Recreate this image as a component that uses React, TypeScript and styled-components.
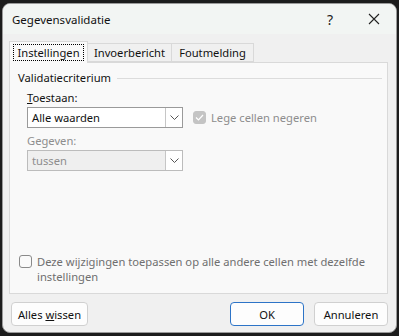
import { FC } from "react";
import styled, { createGlobalStyle } from "styled-components";

const GlobalStyle = createGlobalStyle`
  html, body {
    margin: 0;
    padding: 0;
    background: #1c1c1c;
  }
  body {
    font-family: "Segoe UI", "Noto Sans", "Open Sans", sans-serif;
    font-size: 11.2px;
    color: #1a1a1a;
  }
`;

const Window = styled.div`
  margin: 3px 0 0 2px;
  width: 395px;
  height: 330px;
  box-sizing: border-box;
  background: #f0f0f0;
  border: 1px solid #9a9a9a;
  border-radius: 8px;
  overflow: hidden;
  display: flex;
  flex-direction: column;
`;

const TitleBar = styled.div`
  height: 30px;
  flex-shrink: 0;
  display: flex;
  align-items: center;
  background: #f2f5f3;
  padding-left: 9px;
`;

const Title = styled.div`
  flex: 1;
  font-size: 11.5px;
  color: #111;
`;

const TitleButton = styled.div`
  width: 44px;
  height: 30px;
  display: flex;
  align-items: center;
  justify-content: center;
  color: #222;
  font-size: 14px;
`;

const Body = styled.div`
  flex: 1;
  display: flex;
  flex-direction: column;
  padding: 7px 8px 0 6px;
`;

const Tabs = styled.div`
  display: flex;
  align-items: flex-end;
  height: 21px;
  position: relative;
  z-index: 1;
`;

const Tab = styled.div<{ active?: boolean; w: number }>`
  box-sizing: border-box;
  width: ${({ w }) => w}px;
  height: ${({ active }) => (active ? 22 : 19)}px;
  margin-bottom: ${({ active }) => (active ? -1 : 0)}px;
  display: flex;
  align-items: center;
  justify-content: center;
  border: 1px solid #d9d9d9;
  border-bottom: ${({ active }) => (active ? "none" : "1px solid #d9d9d9")};
  border-left: ${({ active }) => (active ? "1px solid #d9d9d9" : "none")};
  background: ${({ active }) => (active ? "#f9f9f9" : "#f0f0f0")};
  color: #111;
`;

const TabLabel = styled.span<{ focus?: boolean }>`
  padding: 0 3px;
  line-height: 15px;
  outline: ${({ focus }) => (focus ? "1px dotted #000" : "none")};
`;

const Panel = styled.div`
  box-sizing: border-box;
  height: 232px;
  background: #f9f9f9;
  border: 1px solid #d9d9d9;
  display: flex;
  flex-direction: column;
  padding: 7px 5px 0 8px;
`;

const GroupHeader = styled.div`
  display: flex;
  align-items: center;
  gap: 6px;
  color: #111;
  line-height: 16px;
`;

const GroupLine = styled.div`
  flex: 1;
  height: 1px;
  background: #dcdcdc;
`;

const Criteria = styled.div`
  padding: 4px 0 0 9px;
  display: flex;
  flex-direction: column;
`;

const Label = styled.div<{ disabled?: boolean; gap?: number }>`
  color: ${({ disabled }) => (disabled ? "#8d8d8d" : "#111")};
  line-height: 16px;
  margin-top: ${({ gap }) => gap || 0}px;
`;

const Row = styled.div`
  display: flex;
  align-items: center;
  gap: 10px;
  margin-top: 1px;
`;

const Select = styled.div<{ disabled?: boolean }>`
  box-sizing: border-box;
  width: 156px;
  height: 21px;
  display: flex;
  border: 1px solid ${({ disabled }) => (disabled ? "#bcbcbc" : "#9a9a9a")};
  background: ${({ disabled }) => (disabled ? "#efefef" : "#fff")};
  color: ${({ disabled }) => (disabled ? "#8d8d8d" : "#111")};
`;

const SelectValue = styled.div`
  flex: 1;
  display: flex;
  align-items: center;
  padding-left: 4px;
`;

const SelectArrow = styled.div`
  width: 16px;
  display: flex;
  align-items: center;
  justify-content: center;
  background: #fff;
  border-left: 1px solid #c6c6c6;
`;

const Check = styled.div<{ checked?: boolean; nudge?: number }>`
  box-sizing: border-box;
  width: 13px;
  height: 13px;
  border-radius: 3px;
  flex-shrink: 0;
  margin-top: ${({ nudge }) => nudge || 0}px;
  display: flex;
  align-items: center;
  justify-content: center;
  border: 1px solid ${({ checked }) => (checked ? "#c4c4c4" : "#8a8a8a")};
  background: ${({ checked }) => (checked ? "#c4c4c4" : "#fafafa")};
`;

const CheckRow = styled.div`
  display: flex;
  align-items: center;
  gap: 5px;
  color: #8d8d8d;
`;

const Spacer = styled.div`
  flex: 1;
`;

const ApplyRow = styled.div`
  display: flex;
  align-items: flex-start;
  gap: 5px;
  padding: 0 0 9px 1px;
  color: #6f6f6f;
  line-height: 15px;
  white-space: nowrap;
`;

const Footer = styled.div`
  display: flex;
  align-items: center;
  padding: 8px 0 0 2px;
  gap: 10px;
`;

const Button = styled.button<{ primary?: boolean; w?: number }>`
  box-sizing: border-box;
  width: ${({ w }) => w || 74}px;
  height: 24px;
  border-radius: 4px;
  font: inherit;
  color: #111;
  background: #fdfdfd;
  border: 1px solid ${({ primary }) => (primary ? "#2d74c7" : "#d0d0d0")};
  padding: 0;
`;

const Underline = styled.span`
  text-decoration: underline;
`;

const Chevron: FC = () => (
  <svg width="9" height="5" viewBox="0 0 9 5">
    <path d="M0.5 0.5 L4.5 4.5 L8.5 0.5" fill="none" stroke="#555" strokeWidth="1" />
  </svg>
);

const Tick: FC = () => (
  <svg width="9" height="7" viewBox="0 0 9 7">
    <path d="M1 3.5 L3.5 6 L8 1" fill="none" stroke="#fff" strokeWidth="1.2" />
  </svg>
);

const App: FC = () => (
  <>
    <GlobalStyle />
    <Window>
      <TitleBar>
        <Title>Gegevensvalidatie</Title>
        <TitleButton>?</TitleButton>
        <TitleButton>
          <svg width="12" height="12" viewBox="0 0 12 12">
            <path d="M1 1 L11 11 M11 1 L1 11" stroke="#222" strokeWidth="1.1" />
          </svg>
        </TitleButton>
      </TitleBar>
      <Body>
        <Tabs>
          <Tab active w={79}>
            <TabLabel focus>Instellingen</TabLabel>
          </Tab>
          <Tab w={84}>
            <TabLabel>Invoerbericht</TabLabel>
          </Tab>
          <Tab w={82}>
            <TabLabel>Foutmelding</TabLabel>
          </Tab>
        </Tabs>
        <Panel>
          <GroupHeader>
            Validatiecriterium
            <GroupLine />
          </GroupHeader>
          <Criteria>
            <Label>
              <Underline>T</Underline>oestaan:
            </Label>
            <Row>
              <Select>
                <SelectValue>Alle waarden</SelectValue>
                <SelectArrow>
                  <Chevron />
                </SelectArrow>
              </Select>
              <CheckRow>
                <Check checked>
                  <Tick />
                </Check>
                Lege cellen negeren
              </CheckRow>
            </Row>
            <Label disabled gap={5}>
              Gegeven:
            </Label>
            <Row>
              <Select disabled>
                <SelectValue>tussen</SelectValue>
                <SelectArrow>
                  <Chevron />
                </SelectArrow>
              </Select>
            </Row>
          </Criteria>
          <Spacer />
          <ApplyRow>
            <Check nudge={1} />
            <span>
              Deze wijzigingen toepassen op alle andere cellen met dezelfde
              <br />
              instellingen
            </span>
          </ApplyRow>
        </Panel>
        <Footer>
          <Button w={77}>
            Alles <Underline>w</Underline>issen
          </Button>
          <Spacer />
          <Button primary>OK</Button>
          <Button>Annuleren</Button>
        </Footer>
      </Body>
    </Window>
  </>
);

export default App;
